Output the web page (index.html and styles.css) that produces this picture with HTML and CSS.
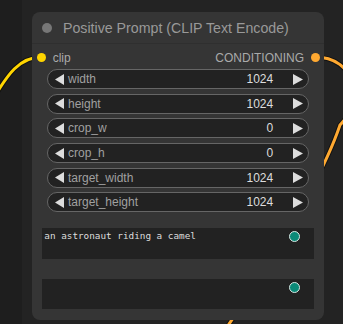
FILE: index.html
```html
<!DOCTYPE html>
<html>
<head>
<meta charset="utf-8">
<link rel="stylesheet" href="styles.css">
</head>
<body>
<div class="canvas">
  <svg class="wires" width="343" height="324" viewBox="0 0 343 324">
    <path class="wire-shadow" d="M42 57 C20 57 8 72 -12 108"/>
    <path class="wire yellow" d="M42 57 C20 57 8 72 -12 108"/>
    <path class="wire-shadow" d="M315 57 C355 57 365 100 340 125 C330 155 300 220 225 330"/>
    <path class="wire orange" d="M315 57 C355 57 365 100 340 125 C330 155 300 220 225 330"/>
  </svg>
  <div class="node">
    <div class="title">
      <span class="title-dot"></span>
      <span class="title-text">Positive Prompt (CLIP Text Encode)</span>
    </div>
    <div class="slots">
      <div class="slot-in"><span class="slot-dot yellow-dot"></span><span>clip</span></div>
      <div class="slot-out"><span>CONDITIONING</span><span class="slot-dot orange-dot"></span></div>
    </div>
    <div class="widgets">
      <div class="widget">
        <svg class="arrow-l" width="9" height="11" viewBox="0 0 9 11"><polygon points="9,0 0,5.5 9,11"/></svg>
        <span class="label">width</span><span class="value">1024</span>
        <svg class="arrow-r" width="10" height="11" viewBox="0 0 10 11"><polygon points="0,0 10,5.5 0,11"/></svg>
      </div>
      <div class="widget">
        <svg class="arrow-l" width="9" height="11" viewBox="0 0 9 11"><polygon points="9,0 0,5.5 9,11"/></svg>
        <span class="label">height</span><span class="value">1024</span>
        <svg class="arrow-r" width="10" height="11" viewBox="0 0 10 11"><polygon points="0,0 10,5.5 0,11"/></svg>
      </div>
      <div class="widget">
        <svg class="arrow-l" width="9" height="11" viewBox="0 0 9 11"><polygon points="9,0 0,5.5 9,11"/></svg>
        <span class="label">crop_w</span><span class="value">0</span>
        <svg class="arrow-r" width="10" height="11" viewBox="0 0 10 11"><polygon points="0,0 10,5.5 0,11"/></svg>
      </div>
      <div class="widget">
        <svg class="arrow-l" width="9" height="11" viewBox="0 0 9 11"><polygon points="9,0 0,5.5 9,11"/></svg>
        <span class="label">crop_h</span><span class="value">0</span>
        <svg class="arrow-r" width="10" height="11" viewBox="0 0 10 11"><polygon points="0,0 10,5.5 0,11"/></svg>
      </div>
      <div class="widget">
        <svg class="arrow-l" width="9" height="11" viewBox="0 0 9 11"><polygon points="9,0 0,5.5 9,11"/></svg>
        <span class="label">target_width</span><span class="value">1024</span>
        <svg class="arrow-r" width="10" height="11" viewBox="0 0 10 11"><polygon points="0,0 10,5.5 0,11"/></svg>
      </div>
      <div class="widget">
        <svg class="arrow-l" width="9" height="11" viewBox="0 0 9 11"><polygon points="9,0 0,5.5 9,11"/></svg>
        <span class="label">target_height</span><span class="value">1024</span>
        <svg class="arrow-r" width="10" height="11" viewBox="0 0 10 11"><polygon points="0,0 10,5.5 0,11"/></svg>
      </div>
    </div>
    <div class="textbox first">an astronaut riding a camel<span class="badge"></span></div>
    <div class="textbox second"><span class="badge"></span></div>
  </div>
</div>
</body>
</html>
```
FILE: styles.css
```css
html, body {
  margin: 0;
  padding: 0;
  background: #222;
}
.canvas {
  position: relative;
  width: 343px;
  height: 324px;
  overflow: hidden;
  background: linear-gradient(to right, #1e1e1e 0, #1e1e1e 22px, #232323 22px, #232323 100%);
  font-family: "Liberation Sans", Arial, sans-serif;
}
.wires {
  position: absolute;
  left: 0;
  top: 0;
}
.wire-shadow {
  fill: none;
  stroke: rgba(0, 0, 0, 0.5);
  stroke-width: 5;
}
.wire {
  fill: none;
  stroke-width: 3;
}
.wire.yellow { stroke: #ffd500; }
.wire.orange { stroke: #ffa931; }

.node {
  position: absolute;
  left: 32px;
  top: 12px;
  width: 292px;
  background: #353535;
  border-radius: 8px;
  padding-bottom: 10.5px;
}
.title {
  height: 32px;
  display: flex;
  align-items: center;
  border-bottom: 1px solid #2f2f2f;
  box-sizing: border-box;
}
.title-dot {
  width: 10px;
  height: 10px;
  border-radius: 50%;
  background: #777;
  margin-left: 10px;
  flex: none;
}
.title-text {
  margin-left: 11px;
  font-size: 14.2px;
  line-height: 32px;
  color: #999;
  white-space: nowrap;
}
.slots {
  height: 25.3px;
  padding-top: 2px;
  box-sizing: border-box;
  display: flex;
  align-items: center;
  justify-content: space-between;
  font-size: 12px;
  color: #aaa;
}
.slot-in, .slot-out {
  display: flex;
  align-items: center;
}
.slot-dot {
  width: 9px;
  height: 9px;
  border-radius: 50%;
  flex: none;
}
.slot-in .slot-dot { margin-left: 5.2px; margin-right: 6.5px; }
.slot-out .slot-dot { margin-left: 6.5px; margin-right: 4.5px; }
.yellow-dot { background: #ffd500; }
.orange-dot { background: #ffa931; }

.widgets {
  display: flex;
  flex-direction: column;
  gap: 4.6px;
  margin: 0 15px;
}
.widget {
  height: 20px;
  box-sizing: border-box;
  border: 1px solid #666;
  border-radius: 10px;
  background: #222;
  display: flex;
  align-items: center;
  padding-left: 7px;
  padding-right: 5.5px;
  font-size: 12px;
}
.widget svg polygon { fill: #ddd; }
.arrow-l, .arrow-r { flex: none; display: block; }
.label {
  margin-left: 4px;
  color: #a0a0a0;
  white-space: nowrap;
}
.value {
  flex: 1;
  text-align: right;
  color: #ddd;
  margin-right: 19.3px;
}
.textbox {
  position: relative;
  margin: 0 10px;
  background: #222;
  box-sizing: border-box;
  font-family: "DejaVu Sans Mono", monospace;
  font-size: 9.33px;
  line-height: 12px;
  color: #ddd;
  padding: 2.4px 2.3px 0;
  white-space: nowrap;
}
.textbox.first {
  margin-top: 15.4px;
  height: 31px;
}
.textbox.second {
  margin-top: 20.3px;
  height: 30.3px;
}
.badge {
  position: absolute;
  right: 14px;
  top: 3px;
  width: 11px;
  height: 11px;
  box-sizing: border-box;
  border-radius: 50%;
  background: #0b8a78;
  border: 1px solid #d8e8e4;
}
```
